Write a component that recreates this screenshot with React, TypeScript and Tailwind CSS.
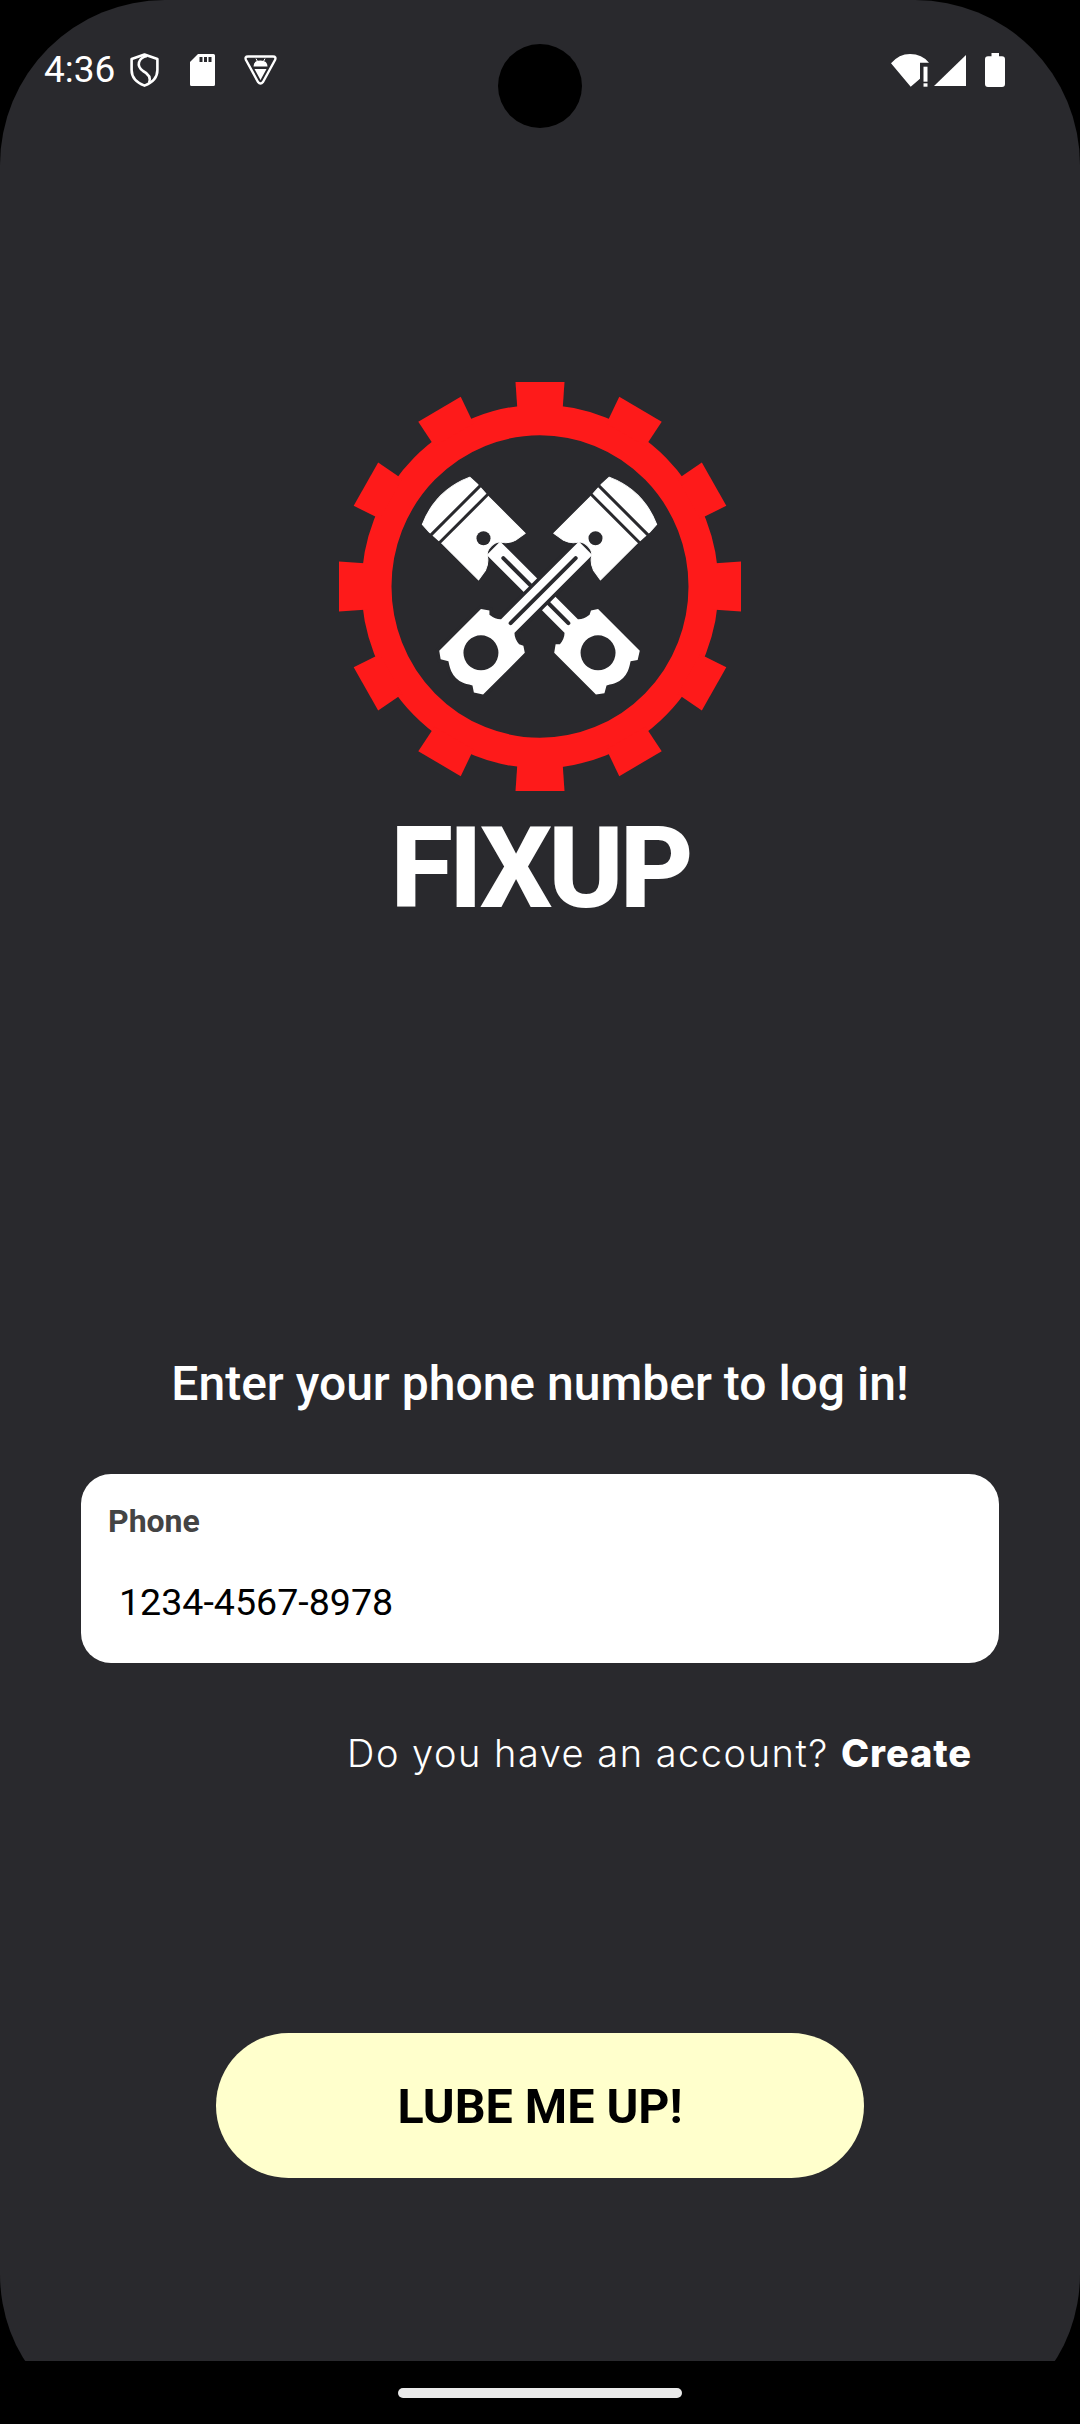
const BG = "#29292d";

function Piston({ outline }: { outline?: boolean }) {
  const body =
    "M-33.5 -53 Q0 -68 33.5 -53 L34 -43 L33 -25 L33 26 L21 24 Q15 22 11 17 Q8 11 0 11 Q-8 11 -11 17 Q-15 22 -21 24 L-33 26 L-33 -25 L-34 -43 Z";
  const rod =
    "M-9.5 14 L-9.5 124 Q-13 128 -21 129 L-24 126 L-31 131 L-31 190 L-24 195 L-17 191 Q-11 195 -8 196 Q0 199 8 196 Q11 195 17 191 L23 195 L31 190 L31 131 L25 127 L21 129 Q13 128 9.5 124 L9.5 14 Z";
  return (
    <g>
      {outline && <path d={rod} fill="none" stroke={BG} strokeWidth={7} />}
      <path d={body} fill="#fff" stroke="#fff" strokeWidth={1} strokeLinejoin="round" />
      <path d={rod} fill="#fff" />
      <line x1={-35} y1={-39.5} x2={35} y2={-39.5} stroke={BG} strokeWidth={3} />
      <line x1={-35} y1={-28} x2={35} y2={-28} stroke={BG} strokeWidth={3} />
      <circle cx={0} cy={0} r={7} fill={BG} />
      <circle cx={0} cy={162} r={17.5} fill={BG} />
      <line x1={0} y1={28} x2={0} y2={120} stroke={BG} strokeWidth={4} strokeLinecap="round" />
    </g>
  );
}

function Logo() {
  const angles = [0, 30, 60, 90, 120, 150, 180, 210, 240, 270, 300, 330];
  return (
    <svg width={440} height={440} viewBox="320 370 440 440" className="block">
      <g transform="translate(540 586.5) scale(1 1.018)">
        <circle cx={0} cy={0} r={163.5} fill="none" stroke="#fe1a1a" strokeWidth={30} />
        {angles.map((a) => (
          <polygon key={a} points="-24.5,-201 24.5,-201 22.5,-172 -22.5,-172" fill="#fe1a1a" transform={`rotate(${a})`} />
        ))}
      </g>
      <g transform="translate(483.5 538.3) rotate(-45)">
        <Piston />
      </g>
      <g transform="translate(595.5 538.3) rotate(45)">
        <Piston outline />
      </g>
    </svg>
  );
}

function ShieldIcon() {
  return (
    <svg width={29} height={34} viewBox="0 0 29 34" fill="none" stroke="#fff" strokeWidth={2.6}>
      <path d="M14.5 1.6 L27.4 6 V17 C27.4 25 21.5 30 14.5 32.6 C7.5 30 1.6 25 1.6 17 V6 Z" strokeLinejoin="round" />
      <path d="M17 3 C8 5 6 13 13 18 C19 21 21 25 19 30" />
    </svg>
  );
}

function SdIcon() {
  return (
    <svg width={25} height={32} viewBox="0 0 25 32">
      <path d="M8 0 H23.5 a1.5 1.5 0 0 1 1.5 1.5 V30.5 a1.5 1.5 0 0 1 -1.5 1.5 H1.5 a1.5 1.5 0 0 1 -1.5 -1.5 V8 Z" fill="#fff" />
      <path d="M9.5 3 h3 v5 h-3 Z M14 3 h3 v5 h-3 Z M18.5 3 h3 v5 h-3 Z" fill={BG} />
    </svg>
  );
}

function AndroidTriangleIcon() {
  return (
    <svg width={33} height={30} viewBox="0 0 33 30">
      <path d="M4 1.5 H29 Q32.5 1.5 31 5 L19 27 Q16.5 30 14 27 L2 5 Q0.5 1.5 4 1.5 Z" fill="none" stroke="#fff" strokeWidth={2.4} strokeLinejoin="round" />
      <path d="M9.5 11.5 Q9.5 5.5 16.5 5.5 Q23.5 5.5 23.5 11.5 Z M10.5 14 H22.5 L16.5 25 Z" fill="#fff" />
      <path d="M12 3.6 L13.4 6.2 M21 3.6 L19.6 6.2" stroke="#fff" strokeWidth={1} />
    </svg>
  );
}

function WifiIcon() {
  return (
    <svg width={38} height={33} viewBox="0 0 38 33" fill="#fff">
      <path d="M0 9.3 Q8 0 19 0 Q31 0 38 8.7 H29 V24.7 L19.7 32.7 Z" />
      <rect x={32.5} y={12.7} width={4} height={15} />
      <rect x={32.5} y={29.3} width={4} height={3.4} />
    </svg>
  );
}

function SignalIcon() {
  return (
    <svg width={32} height={31} viewBox="0 0 32 31" fill="#fff">
      <path d="M0 31 L32 0 V31 Z" />
    </svg>
  );
}

function BatteryIcon() {
  return (
    <svg width={20} height={34} viewBox="0 0 20 34" fill="#fff">
      <path d="M6.5 0 H14 V3.3 H17 Q20 3.3 20 6.3 V31 Q20 34 17 34 H3 Q0 34 0 31 V6.3 Q0 3.3 3 3.3 H6.5 Z" />
    </svg>
  );
}

export default function App() {
  return (
    <div className="relative w-[1080px] h-[2424px] overflow-hidden bg-black font-['Roboto',sans-serif]">
      <div className="flex flex-col items-center h-full rounded-t-[165px] [border-bottom-left-radius:135px_150px] [border-bottom-right-radius:135px_150px] bg-[#29292d]">
        <div className="flex w-full h-[140px] items-center justify-between pl-[44px] pr-[75px] text-white">
          <div className="flex items-center">
            <span className="text-[37px] leading-[50px] w-[86px]">4:36</span>
            <ShieldIcon />
            <span className="ml-[31px]"><SdIcon /></span>
            <span className="ml-[29px]"><AndroidTriangleIcon /></span>
          </div>
          <div className="flex items-center">
            <WifiIcon />
            <span className="ml-[5px]"><SignalIcon /></span>
            <span className="ml-[19px]"><BatteryIcon /></span>
          </div>
        </div>

        <div className="mt-[230px]"><Logo /></div>
        <div className="mt-[1px] text-[114px] leading-[115px] font-extrabold tracking-[-4px] text-white">FIXUP</div>

        <h1 className="mt-[428px] text-[48px] leading-[60px] font-medium text-white">Enter your phone number to log in!</h1>

        <div className="mt-[60px] w-[918px] h-[189px] rounded-[30px] bg-white pt-[27px] pl-[27px]">
          <div className="text-[32px] leading-[40px] font-bold text-[#444444]">Phone</div>
          <div className="mt-[36px] pl-[11px] text-[37.6px] leading-[50px] text-black">1234-4567-8978</div>
        </div>

        <div className="mt-[65px] self-end pr-[108px] text-[38px] leading-[50px] text-white font-['Inter',sans-serif]">
          <span className="font-light tracking-[1.5px]">Do you have an account? </span>
          <span className="font-extrabold tracking-[0.9px]">Create</span>
        </div>

        <button className="mt-[255px] w-[648px] h-[145px] rounded-full bg-[#ffffcc] pt-[3px] text-[48.4px] font-bold text-black">LUBE ME UP!</button>
      </div>

      <div className="absolute left-1/2 top-[44px] size-[84px] -translate-x-1/2 rounded-full bg-black" />

      <div className="absolute bottom-0 left-0 right-0 flex h-[63px] items-center justify-center bg-black">
        <div className="w-[284px] h-[10px] rounded-[5px] bg-[#eaeaea]" />
      </div>
    </div>
  );
}
